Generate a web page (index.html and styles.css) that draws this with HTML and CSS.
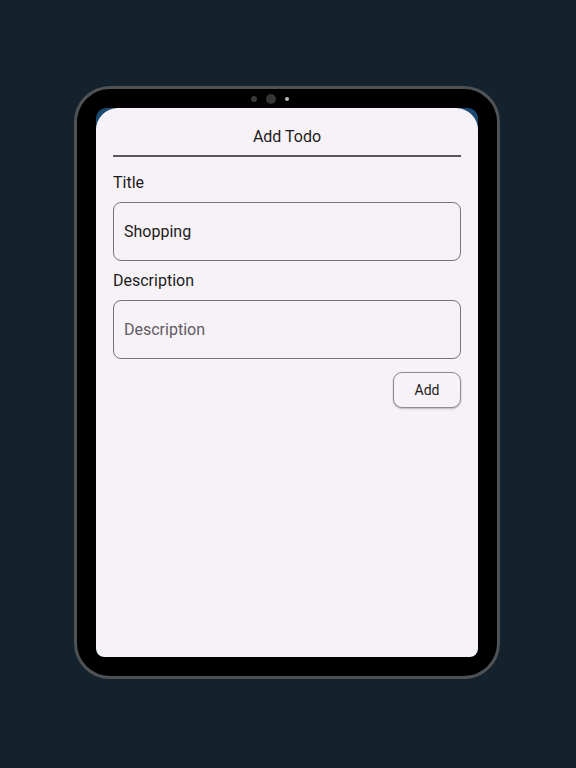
FILE: index.html
```html
<!DOCTYPE html>
<html>
<head>
<meta charset="utf-8">
<link rel="stylesheet" href="styles.css">
</head>
<body>
<div class="stage">
  <div class="tablet">
    <div class="camera">
      <span class="dot small"></span>
      <span class="dot big"></span>
      <span class="dot tiny"></span>
    </div>
    <div class="screen">
      <div class="sheet">
        <div class="header">Add Todo</div>
        <div class="divider"></div>
        <div class="label">Title</div>
        <div class="field"><span class="value">Shopping</span></div>
        <div class="label">Description</div>
        <div class="field"><span class="placeholder">Description</span></div>
        <div class="actions"><button class="btn">Add</button></div>
      </div>
    </div>
  </div>
</div>
</body>
</html>
```

FILE: styles.css
```css
html, body {
  margin: 0;
  padding: 0;
  background: #14222d;
  font-family: Roboto, "Noto Sans", sans-serif;
}
.stage {
  width: 576px;
  height: 768px;
  display: flex;
  justify-content: flex-start;
  padding: 86px 0 0 74px;
  box-sizing: border-box;
}
.tablet {
  position: relative;
  width: 426px;
  height: 593px;
  box-sizing: border-box;
  border: 3px solid #4f5255;
  border-radius: 36px;
  background: #000;
  padding: 19px;
}
.camera {
  position: absolute;
  top: 5px;
  left: 0;
  right: 34px;
  display: flex;
  justify-content: center;
  align-items: center;
  gap: 9px;
  height: 10px;
}
.dot {
  border-radius: 50%;
  background: #3a3a3a;
}
.dot.small { width: 6px; height: 6px; }
.dot.big { width: 10px; height: 10px; background: #353535; }
.dot.tiny { width: 4px; height: 4px; background: #bbb; }
.screen {
  width: 100%;
  height: 100%;
  background: #1b4a70;
  border-radius: 10px 10px 8px 8px;
  overflow: hidden;
}
.sheet {
  height: 100%;
  background: #f6f2f7;
  border-radius: 22px 22px 8px 8px;
  padding: 0 17px;
  box-sizing: border-box;
  display: flex;
  flex-direction: column;
}
.header {
  text-align: center;
  font-size: 16px;
  color: #1d1b20;
  padding-top: 19px;
  line-height: 20px;
}
.divider {
  margin-top: 8px;
  height: 2px;
  background: #5a575c;
}
.label {
  font-size: 16px;
  color: #1d1b20;
  line-height: 20px;
  margin-top: 16px;
}
.label + .field { margin-top: 9px; }
.field {
  height: 59px;
  box-sizing: border-box;
  border: 1px solid #79747e;
  border-radius: 8px;
  display: flex;
  align-items: center;
  padding: 0 10px;
  font-size: 16px;
}
.field + .label { margin-top: 10px; }
.value { color: #1d1b20; }
.placeholder { color: #5f5b64; }
.actions {
  display: flex;
  justify-content: flex-end;
  margin-top: 13px;
}
.btn {
  width: 68px;
  height: 36px;
  border: 1px solid #8e8a92;
  border-radius: 9px;
  background: #f6f2f7;
  font-family: Roboto, "Noto Sans", sans-serif;
  font-size: 14px;
  color: #1d1b20;
  box-shadow: 0 1px 2px rgba(0,0,0,0.25);
}
```
